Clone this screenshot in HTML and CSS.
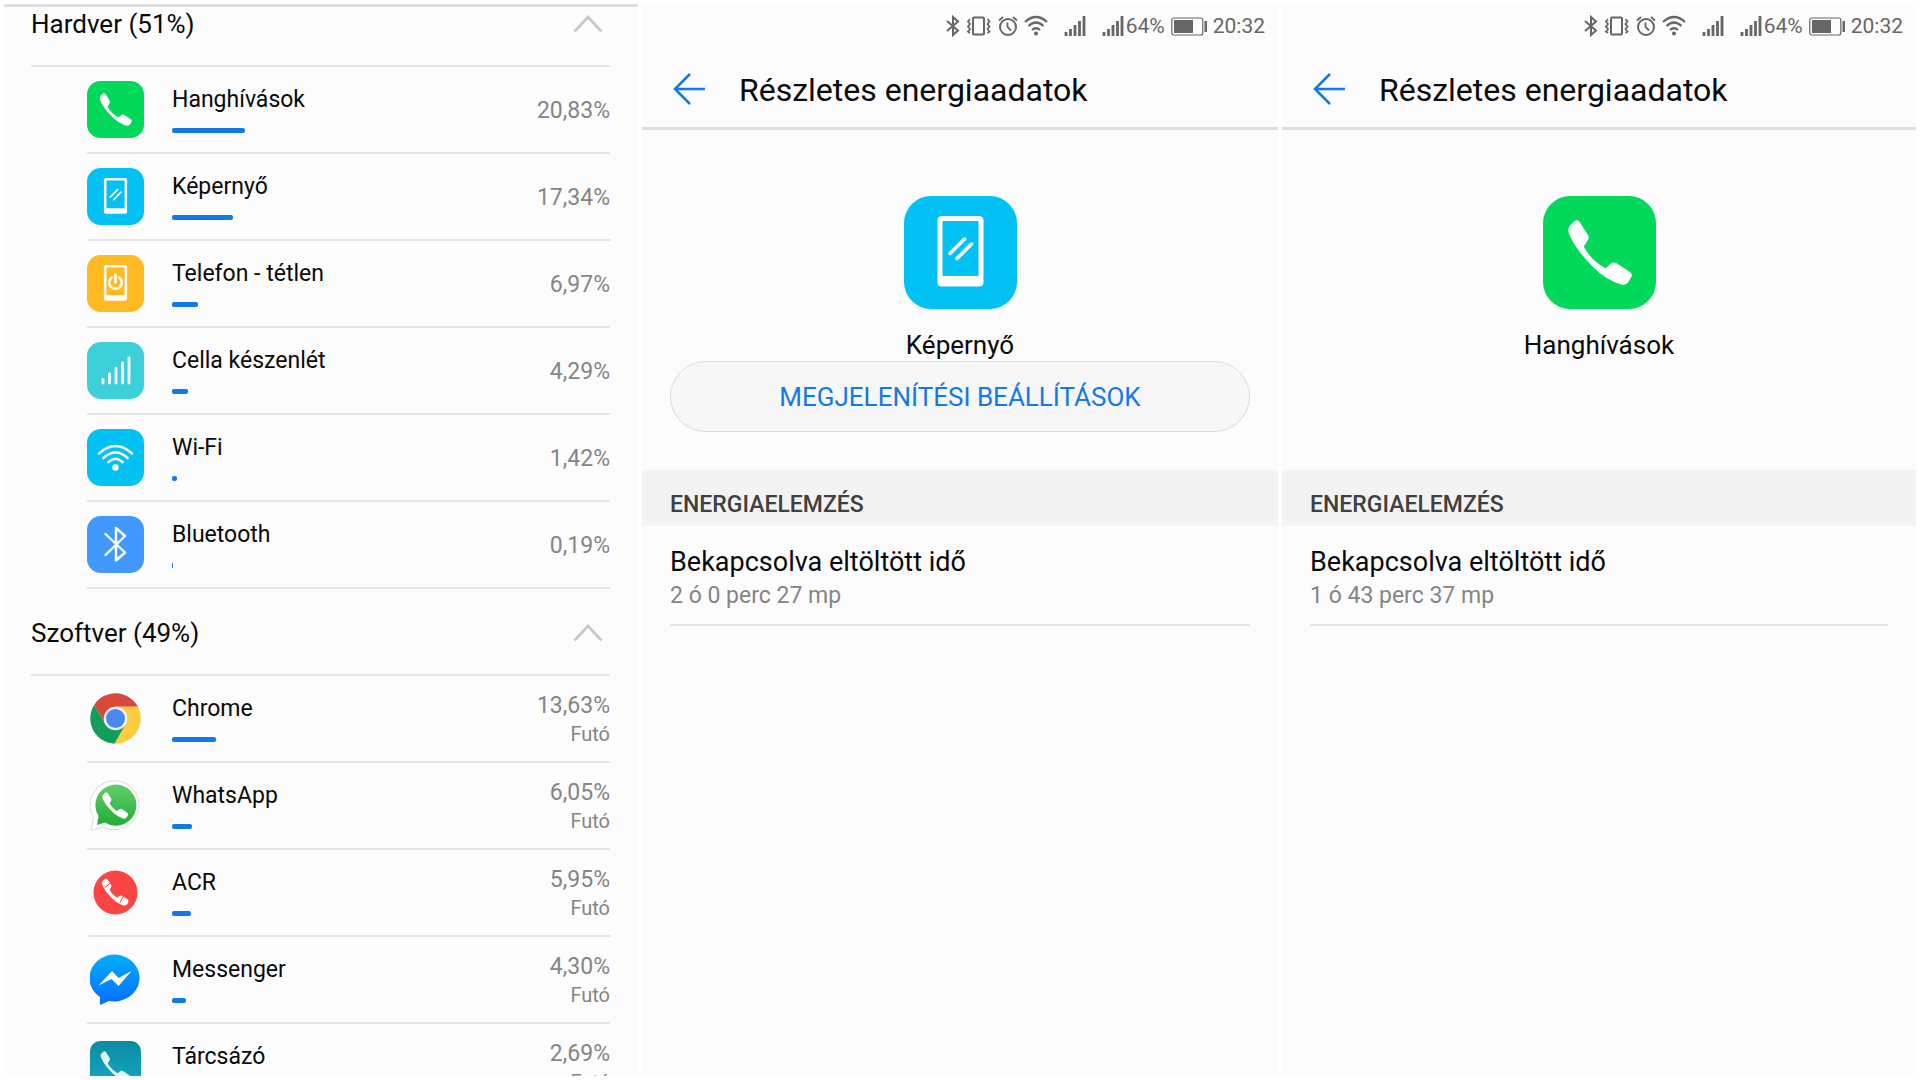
FILE: index.html
```html
<!DOCTYPE html>
<html lang="hu">
<head>
<meta charset="utf-8">
<meta name="viewport" content="width=device-width, initial-scale=1">
<title>Részletes energiaadatok</title>
<link rel="stylesheet" href="styles.css">
</head>
<body>
<svg class="defs" aria-hidden="true">
  <defs>
    <linearGradient id="g-whatsapp" x1="0" y1="0" x2="0" y2="1"><stop offset="0" stop-color="#60cf68"/><stop offset="1" stop-color="#22ad38"/></linearGradient>
    <linearGradient id="g-messenger" x1="0" y1="0" x2="0" y2="1"><stop offset="0" stop-color="#00aeff"/><stop offset="1" stop-color="#0a6cff"/></linearGradient>
    <linearGradient id="g-dialer" x1="0" y1="0" x2="0" y2="1"><stop offset="0" stop-color="#0c8ba3"/><stop offset="1" stop-color="#12adc2"/></linearGradient>
    <path id="handset" d="M31 25.500Q34.500 22.500 37 26.500L45 39Q46.500 41.500 45 44L40.800 50.500Q48 64.500 62.600 72.300L68 67.500Q71 65.500 74 67.500L87 76Q90 78.500 88 81.500L85 86.500Q82.500 89.500 78 88.500Q63 84 50 71Q33 54 26.500 39Q23.500 32 28 28.500Z"/>
    <path id="phone-frame" fill-rule="evenodd" d="M38 20H75Q79.500 20 79.500 24.500V86Q79.500 90.500 75 90.500H38Q33.500 90.500 33.500 86V24.500Q33.500 20 38 20ZM38.500 25V80H74.500V25Z"/>
  </defs>
  <symbol id="i-call" viewBox="0 0 113 113"><rect width="113" height="113" rx="27" fill="#02d85a"/><use href="#handset" fill="#fff"/></symbol>
  <symbol id="i-screen" viewBox="0 0 113 113"><rect width="113" height="113" rx="27" fill="#03c1f3"/><use href="#phone-frame" fill="#fff"/><path d="M46 57.500L60.500 43M53 62.500L67.500 48" stroke="#fff" stroke-width="3.500" stroke-linecap="round"/></symbol>
  <symbol id="i-idle" viewBox="0 0 113 113"><rect width="113" height="113" rx="27" fill="#feba20"/><use href="#phone-frame" fill="#fff"/><path d="M49 44.500A12.500 12.500 0 1 0 64 44.500M56.500 39V54" fill="none" stroke="#fff" stroke-width="5" stroke-linecap="round"/></symbol>
  <symbol id="i-cell" viewBox="0 0 57 57"><rect width="57" height="57" rx="14" fill="#3dd0db"/><path d="M16 37.500V41M22.500 32V41M29 26.500V41M35.500 21V41M42 16V41" stroke="#fff" stroke-width="2.800" stroke-linecap="round"/></symbol>
  <symbol id="i-wifi" viewBox="0 0 57 57"><rect width="57" height="57" rx="14" fill="#03c1f3"/><path d="M12 24.500Q28.500 9.500 45 24.500M16.500 29Q28.500 18 40.500 29M21.500 33Q28.500 26.500 35.500 33" fill="none" stroke="#fff" stroke-width="2.600" stroke-linecap="round"/><circle cx="28.500" cy="38.500" r="3.200" fill="#fff"/></symbol>
  <symbol id="i-bluetooth" viewBox="0 0 57 57"><rect width="57" height="57" rx="14" fill="#4199fd"/><path d="M18.500 18L38 36.500L29 44.500V12L38 20L18.500 39" fill="none" stroke="#fff" stroke-width="2.400" stroke-linecap="round" stroke-linejoin="round"/></symbol>
  <symbol id="i-chrome" viewBox="0 0 51 51"><path fill="#d8483b" d="M4.100 11.900A25.500 25.500 0 0 1 48 13.800H25.500V25.500L15.400 31.350Z"/><path fill="#fdcd40" d="M48 13.800A25.500 25.500 0 0 1 24.400 50.800L35.600 31.350L25.500 25.500V13.800Z"/><path fill="#129d59" d="M24.400 50.800A25.500 25.500 0 0 1 4.100 11.900L15.400 31.350L25.500 25.500L35.600 31.350Z"/><circle cx="25.500" cy="25.500" r="11.800" fill="#f3f3f3"/><circle cx="25.500" cy="25.500" r="9.500" fill="#4a88ef"/></symbol>
  <symbol id="i-whatsapp" viewBox="0 0 51 51"><path d="M1 50L3.500 37.500A24.500 24.500 0 1 1 13.500 47Z" fill="#fff" stroke="#dcdcdc"/><path d="M7 45L8.500 36A20.500 20.500 0 1 1 15 42.500Z" fill="url(#g-whatsapp)"/><use href="#handset" transform="translate(3 3.500) scale(.39)" fill="#fff" stroke="#fff" stroke-width="3"/></symbol>
  <symbol id="i-acr" viewBox="0 0 51 51"><circle cx="25.500" cy="25.500" r="22" fill="#fb4545"/><use href="#handset" transform="translate(2.500 2.500) scale(.4)" fill="#fff" stroke="#fff" stroke-width="3"/><path d="M15 20.500L22 15M30 35.500L34 28" stroke="#fb4545"/></symbol>
  <symbol id="i-messenger" viewBox="0 0 51 51"><path d="M25.500 .5A25.500 23.500 0 1 1 19 47L10 51V43A25.500 23.500 0 0 1 25.500 .5Z" fill="url(#g-messenger)"/><path d="M8.500 31.500L22 17L28.500 24L41.500 17L28.500 32L21.500 25Z" fill="#fff"/></symbol>
  <symbol id="i-dialer" viewBox="0 0 51 51"><rect width="51" height="51" rx="10" fill="url(#g-dialer)"/><use href="#handset" transform="translate(-1 -1) scale(.46)" fill="#e2f1f4"/></symbol>

  <symbol id="s-bluetooth" viewBox="0 0 14 22"><path d="M1 6L12 15.500L7 20V2L12 6.500L1 16" fill="none" stroke="currentColor" stroke-width="2"/></symbol>
  <symbol id="s-vibrate" viewBox="0 0 26 22"><rect x="7" y="2.500" width="11" height="17" rx="1" fill="none" stroke="currentColor" stroke-width="2"/><path d="M4 4L2 6.500L4 9L2 11.500L4 14L2 16.500L4 18M21.500 4L23.500 6.500L21.500 9L23.500 11.500L21.500 14L23.500 16.500L21.500 18" fill="none" stroke="currentColor" stroke-width="1.800"/></symbol>
  <symbol id="s-alarm" viewBox="0 0 20 22"><circle cx="10" cy="12" r="8" fill="none" stroke="currentColor" stroke-width="2"/><path d="M9.500 7.500V12L13 15.500M1 5.500L5 2M19 5.500L15 2" fill="none" stroke="currentColor" stroke-width="1.800"/></symbol>
  <symbol id="s-wifi" viewBox="0 0 24 22"><path d="M1 7Q12 -3 23 7M4.500 11Q12 4 19.500 11M8 15Q12 11.500 16 15" fill="none" stroke="currentColor" stroke-width="2.200"/><circle cx="12" cy="18.500" r="2" fill="currentColor"/></symbol>
  <symbol id="s-signal" viewBox="0 0 22 22"><path d="M2 17V21M6.500 14V21M11 10V21M15.500 6V21M20 1V21" stroke="currentColor" stroke-width="2.800"/></symbol>
  <symbol id="s-battery" viewBox="0 0 36 22"><rect x=".8" y="3" width="31" height="17" rx="2" fill="none" stroke="currentColor" stroke-width="1.200"/><rect x="3" y="5" width="19" height="13" fill="currentColor"/><rect x="33.500" y="6" width="2.500" height="11" fill="currentColor"/></symbol>
  <symbol id="s-chevron" viewBox="0 0 30 18"><path d="M1.500 16.500L15 2L28.500 16.500" fill="none" stroke="currentColor" stroke-width="2.800"/></symbol>
  <symbol id="s-back" viewBox="0 0 32 32"><path d="M17 1L2 16L17 31M2 16H32" fill="none" stroke="currentColor" stroke-width="2.600"/></symbol>
</svg>

<main class="screens">
  <section class="screen list-screen" aria-label="Fogyasztás">
    <section class="group">
      <button class="group-head" type="button" aria-expanded="true"><span>Hardver (51%)</span><svg class="chevron"><use href="#s-chevron"/></svg></button>
      <ul class="rows">
        <li class="row"><svg class="tile"><use href="#i-call"/></svg><div class="usage"><span class="name">Hanghívások</span><span class="bar" style="width:73px"></span></div><div class="value">20,83%</div></li>
        <li class="row"><svg class="tile"><use href="#i-screen"/></svg><div class="usage"><span class="name">Képernyő</span><span class="bar" style="width:61px"></span></div><div class="value">17,34%</div></li>
        <li class="row"><svg class="tile"><use href="#i-idle"/></svg><div class="usage"><span class="name">Telefon - tétlen</span><span class="bar" style="width:26px"></span></div><div class="value">6,97%</div></li>
        <li class="row"><svg class="tile"><use href="#i-cell"/></svg><div class="usage"><span class="name">Cella készenlét</span><span class="bar" style="width:16px"></span></div><div class="value">4,29%</div></li>
        <li class="row"><svg class="tile"><use href="#i-wifi"/></svg><div class="usage"><span class="name">Wi-Fi</span><span class="bar" style="width:5px"></span></div><div class="value">1,42%</div></li>
        <li class="row"><svg class="tile"><use href="#i-bluetooth"/></svg><div class="usage"><span class="name">Bluetooth</span><span class="bar" style="width:1px"></span></div><div class="value">0,19%</div></li>
      </ul>
    </section>
    <section class="group">
      <button class="group-head" type="button" aria-expanded="true"><span>Szoftver (49%)</span><svg class="chevron"><use href="#s-chevron"/></svg></button>
      <ul class="rows">
        <li class="row"><svg class="tile app"><use href="#i-chrome"/></svg><div class="usage"><span class="name">Chrome</span><span class="bar" style="width:44px"></span></div><div class="value">13,63%<span class="state">Futó</span></div></li>
        <li class="row"><svg class="tile app"><use href="#i-whatsapp"/></svg><div class="usage"><span class="name">WhatsApp</span><span class="bar" style="width:20px"></span></div><div class="value">6,05%<span class="state">Futó</span></div></li>
        <li class="row"><svg class="tile app"><use href="#i-acr"/></svg><div class="usage"><span class="name">ACR</span><span class="bar" style="width:19px"></span></div><div class="value">5,95%<span class="state">Futó</span></div></li>
        <li class="row"><svg class="tile app"><use href="#i-messenger"/></svg><div class="usage"><span class="name">Messenger</span><span class="bar" style="width:14px"></span></div><div class="value">4,30%<span class="state">Futó</span></div></li>
        <li class="row"><svg class="tile app"><use href="#i-dialer"/></svg><div class="usage"><span class="name">Tárcsázó</span><span class="bar" style="width:9px"></span></div><div class="value">2,69%<span class="state">Futó</span></div></li>
      </ul>
    </section>
  </section>

  <section class="screen">
    <div class="status">
      <svg class="st-bt"><use href="#s-bluetooth"/></svg><svg class="st-vibrate"><use href="#s-vibrate"/></svg><svg class="st-alarm"><use href="#s-alarm"/></svg><svg class="st-wifi"><use href="#s-wifi"/></svg><svg class="st-signal"><use href="#s-signal"/></svg>
      <span class="charge"><svg class="st-signal"><use href="#s-signal"/></svg>64%</span>
      <svg class="st-battery"><use href="#s-battery"/></svg><span>20:32</span>
    </div>
    <header class="titlebar"><button class="back" type="button" aria-label="Vissza"><svg><use href="#s-back"/></svg></button><h1>Részletes energiaadatok</h1></header>
    <div class="hero">
      <svg class="hero-icon"><use href="#i-screen"/></svg>
      <p class="hero-name">Képernyő</p>
      <button class="action" type="button">MEGJELENÍTÉSI BEÁLLÍTÁSOK</button>
    </div>
    <h2 class="band">ENERGIAELEMZÉS</h2>
    <div class="fact"><p class="fact-title">Bekapcsolva eltöltött idő</p><p class="fact-value">2 ó 0 perc 27 mp</p></div>
  </section>

  <section class="screen">
    <div class="status">
      <svg class="st-bt"><use href="#s-bluetooth"/></svg><svg class="st-vibrate"><use href="#s-vibrate"/></svg><svg class="st-alarm"><use href="#s-alarm"/></svg><svg class="st-wifi"><use href="#s-wifi"/></svg><svg class="st-signal"><use href="#s-signal"/></svg>
      <span class="charge"><svg class="st-signal"><use href="#s-signal"/></svg>64%</span>
      <svg class="st-battery"><use href="#s-battery"/></svg><span>20:32</span>
    </div>
    <header class="titlebar"><button class="back" type="button" aria-label="Vissza"><svg><use href="#s-back"/></svg></button><h1>Részletes energiaadatok</h1></header>
    <div class="hero">
      <svg class="hero-icon"><use href="#i-call"/></svg>
      <p class="hero-name">Hanghívások</p>
    </div>
    <h2 class="band">ENERGIAELEMZÉS</h2>
    <div class="fact"><p class="fact-title">Bekapcsolva eltöltött idő</p><p class="fact-value">1 ó 43 perc 37 mp</p></div>
  </section>
</main>
</body>
</html>
```
FILE: styles.css
```css
* {
  box-sizing: border-box;
}

body,
h1,
h2,
p,
ul {
  margin: 0;
  padding: 0;
}

body {
  background: #fff;
  color: #0a0a0a;
  font-family: Roboto, "Liberation Sans", sans-serif;
  font-size: 23px;
  line-height: 28px;
}

button {
  border: 0;
  padding: 0;
  background: none;
  color: inherit;
  font: inherit;
  cursor: pointer;
}

svg {
  display: block;
  flex: none;
}

.defs {
  position: absolute;
  width: 0;
  height: 0;
}

.screens {
  display: grid;
  grid-template-columns: 317fr 318fr 317fr;
  gap: 4px;
  height: 100vh;
  padding: 4px;
}

.screen {
  min-width: 0;
  overflow: hidden;
  background: #fcfcfc;
}

/* Usage list, scrolled a little past its first heading */
.list-screen {
  border-top: 3px solid #dfdfdf;
}

.group {
  padding: 0 28px 0 27px;
}

.group:first-child {
  margin-top: -27px;
}

.group-head {
  display: flex;
  align-items: center;
  justify-content: space-between;
  width: 100%;
  height: 87px;
  padding: 2px 7px 0 0;
  border-bottom: 2px solid #e6e6e6;
  font-size: 26px;
  line-height: 32px;
}

.chevron {
  width: 30px;
  height: 18px;
  color: #c9c9c9;
}

.rows {
  padding-left: 56px;
  list-style: none;
}

.row {
  display: flex;
  align-items: center;
  gap: 28px;
  height: 87px;
  border-bottom: 2px solid #e6e6e6;
}

.tile {
  width: 57px;
  height: 57px;
}

.tile.app {
  padding: 3px;
}

.usage {
  display: flex;
  flex: 1;
  flex-direction: column;
  gap: 14px;
}

.bar {
  height: 5px;
  border-radius: 2px;
  background: #127ae6;
}

.value {
  padding-top: 3px;
  color: #858585;
  text-align: right;
}

.state {
  display: block;
  font-size: 20px;
}

/* Detail screens */
.status {
  display: flex;
  align-items: center;
  justify-content: flex-end;
  gap: 6px;
  height: 46px;
  padding: 0 13px 2px 0;
  color: #666;
  font-size: 21px;
}

.status svg {
  height: 22px;
}

.st-bt {
  width: 14px;
}

.st-vibrate {
  width: 26px;
}

.st-alarm {
  width: 20px;
}

.st-wifi {
  width: 24px;
}

.st-signal {
  width: 22px;
  margin-left: 10px;
}

.st-battery {
  width: 36px;
}

.charge {
  display: flex;
  align-items: center;
  gap: 2px;
}

.titlebar {
  display: flex;
  align-items: center;
  gap: 34px;
  height: 80px;
  padding: 0 28px 0 31px;
  border-bottom: 3px solid #dfdfdf;
}

.back {
  color: #127ae6;
}

.back svg {
  width: 32px;
  height: 32px;
}

h1 {
  padding-top: 3px;
  font-size: 32px;
  font-weight: 400;
  line-height: 40px;
}

.hero {
  display: flex;
  flex-direction: column;
  align-items: center;
  min-height: 340px;
  padding: 66px 28px 38px;
}

.hero-icon {
  width: 113px;
  height: 113px;
}

.hero-name {
  margin-top: 20px;
  font-size: 26px;
  line-height: 32px;
}

.action {
  width: 100%;
  height: 71px;
  border: 1px solid #dcdcdc;
  border-radius: 36px;
  background: #f7f7f7;
  color: #127ae6;
  font-size: 26px;
}

.band {
  padding: 21px 28px 7px;
  background: #f3f3f3;
  color: #404040;
  font-size: 23px;
  font-weight: 500;
}

.fact {
  margin: 0 28px;
  padding: 20px 0 14px;
  border-bottom: 2px solid #e6e6e6;
}

.fact-title {
  margin-bottom: 4px;
  font-size: 27px;
  line-height: 32px;
}

.fact-value {
  color: #858585;
}
```
